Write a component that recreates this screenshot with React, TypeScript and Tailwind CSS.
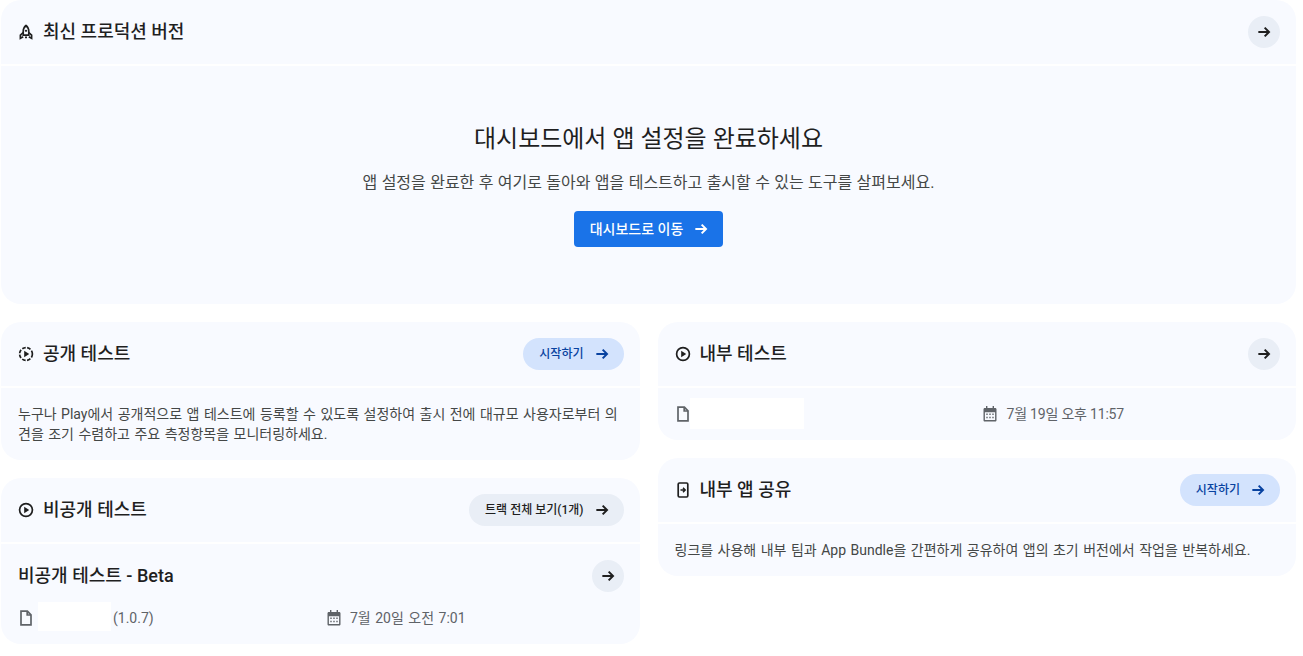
import type { ReactNode } from 'react';

const Arrow = ({ className = 'w-4 h-4' }: { className?: string }) => (
  <svg viewBox="0 0 24 24" className={className} fill="none" stroke="currentColor" strokeWidth="3">
    <path d="M3.5 12H19M13 5.5l6.5 6.5-6.5 6.5" />
  </svg>
);

const Rocket = () => (
  <svg viewBox="0 0 16 16" className="w-4 h-4 text-[#1f1f1f]" fill="none" stroke="currentColor" strokeWidth="1.7">
    <path d="M8 1.5c2 1.6 2.8 4 2.8 6.3v3.4H5.2V7.8C5.2 5.5 6 3.1 8 1.5z" />
    <path d="M5.2 8.5 2.4 11.2v3.2l2.8-1.6M10.8 8.5l2.8 2.7v3.2l-2.8-1.6" />
    <circle cx="8" cy="6.8" r="1.1" fill="currentColor" stroke="none" />
    <path d="M7 13.4h2" />
  </svg>
);

const PlayDashed = () => (
  <svg viewBox="0 0 16 16" className="w-4 h-4 text-[#1f1f1f]" fill="none" stroke="currentColor" strokeWidth="1.7">
    <circle cx="8" cy="8" r="6.4" strokeDasharray="3.6 1.5" />
    <path d="M6.2 4.8v6.4L11.2 8z" fill="currentColor" stroke="none" />
  </svg>
);

const PlayCircle = () => (
  <svg viewBox="0 0 16 16" className="w-4 h-4 text-[#1f1f1f]" fill="none" stroke="currentColor" strokeWidth="1.7">
    <circle cx="8" cy="8" r="6.4" />
    <path d="M6.2 4.8v6.4L11.2 8z" fill="currentColor" stroke="none" />
  </svg>
);

const PhoneShare = () => (
  <svg viewBox="0 0 16 16" className="w-4 h-4 text-[#1f1f1f]" fill="none" stroke="currentColor" strokeWidth="1.7">
    <rect x="3.2" y="1" width="9.6" height="14" rx="1.2" />
    <path d="M5.5 8h4.5M8 5.8 10.2 8 8 10.2" strokeWidth="1.5" />
  </svg>
);

const FileIcon = () => (
  <svg viewBox="0 0 16 16" className="w-4 h-4 text-[#5f6368] shrink-0" fill="none" stroke="currentColor" strokeWidth="1.7">
    <path d="M3 1.2h6.4L13 4.8v10H3z" />
    <path d="M9.2 1.2v3.8H13" />
  </svg>
);

const CalendarIcon = () => (
  <svg viewBox="0 0 16 16" className="w-4 h-4 text-[#5f6368] shrink-0" fill="currentColor">
    <path d="M4 0h1.4v2h5.2V0H12v2h1.2c.8 0 1.3.6 1.3 1.3v10.9c0 .8-.6 1.3-1.3 1.3H2.8c-.8 0-1.3-.6-1.3-1.3V3.3C1.5 2.6 2 2 2.8 2H4zM2.9 6.2v7.9h10.2V6.2z" />
    <path d="M4.3 7.5h1.4v1.4H4.3zM7.3 7.5h1.4v1.4H7.3zM10.3 7.5h1.4v1.4h-1.4zM4.3 10.8h1.4v1.4H4.3zM7.3 10.8h1.4v1.4H7.3zM10.3 10.8h1.4v1.4h-1.4z" />
  </svg>
);

const RoundArrow = () => (
  <button className="w-8 h-8 rounded-full bg-[#e9eef6] flex items-center justify-center text-[#1f1f1f]">
    <Arrow />
  </button>
);

const PillButton = ({ label, blue }: { label: string; blue?: boolean }) => (
  <button
    className={
      blue
        ? 'h-8 pl-4 pr-[14px] rounded-full bg-[#d3e3fd] text-[#0842a0] flex items-center gap-[10px] text-xs font-medium'
        : 'h-8 pl-4 pr-[14px] rounded-full bg-[#e9eef6] text-[#1f1f1f] flex items-center gap-[10px] text-xs font-medium'
    }
  >
    {label}
    <Arrow />
  </button>
);

const Panel = ({ children }: { children: ReactNode }) => (
  <section className="bg-[#f8faff] rounded-[20px] overflow-hidden">{children}</section>
);

const PanelHeader = ({ icon, title, action }: { icon: ReactNode; title: string; action: ReactNode }) => (
  <div className="h-[66px] border-b-2 border-white pl-[17px] pr-4 flex items-center justify-between">
    <div className="flex items-center gap-[9px]">
      {icon}
      <h2 className="text-lg font-medium text-[#1f1f1f]">{title}</h2>
    </div>
    {action}
  </div>
);

export default function App() {
  return (
    <div className="w-[1303px] h-[656px] overflow-hidden bg-white pl-px pr-[7px] font-['Roboto','Noto_Sans_CJK_KR',sans-serif] text-[#1f1f1f]">
      <Panel>
        <PanelHeader icon={<Rocket />} title="최신 프로덕션 버전" action={<RoundArrow />} />
        <div className="h-[238px] flex flex-col items-center pt-[56px]">
          <h1 className="text-2xl leading-[34px]">대시보드에서 앱 설정을 완료하세요</h1>
          <p className="mt-[17px] text-base leading-5 text-[#444746] [word-spacing:0.4px]">
            앱 설정을 완료한 후 여기로 돌아와 앱을 테스트하고 출시할 수 있는 도구를 살펴보세요.
          </p>
          <button className="mt-[18px] h-9 pl-4 pr-[14px] rounded bg-[#1a73e8] text-white text-sm font-medium flex items-center gap-[10px]">
            대시보드로 이동
            <Arrow />
          </button>
        </div>
      </Panel>

      <div className="mt-[18px] grid grid-cols-2 gap-[18px] items-start">
        <div className="flex flex-col gap-[18px]">
          <Panel>
            <PanelHeader icon={<PlayDashed />} title="공개 테스트" action={<PillButton label="시작하기" blue />} />
            <p className="h-[72px] pl-[17px] pr-4 text-sm leading-[20px] text-[#444746] flex items-center break-all [word-spacing:1px]">
              누구나 Play에서 공개적으로 앱 테스트에 등록할 수 있도록 설정하여 출시 전에 대규모 사용자로부터 의견을 조기 수렴하고 주요 측정항목을 모니터링하세요.
            </p>
          </Panel>
          <Panel>
            <PanelHeader icon={<PlayCircle />} title="비공개 테스트" action={<PillButton label="트랙 전체 보기(1개)" />} />
            <div className="h-[100px] pl-[17px] pr-4">
              <div className="h-[64px] flex items-center justify-between">
                <h3 className="text-lg font-medium">비공개 테스트 - Beta</h3>
                <RoundArrow />
              </div>
              <div className="h-5 flex items-center text-sm text-[#5f6368]">
                <div className="w-[308px] flex items-center">
                  <FileIcon />
                  <div className="ml-1 -mt-1 w-[73px] h-[29px] bg-white" />
                  <span className="ml-0.5">(1.0.7)</span>
                </div>
                <div className="flex items-center gap-2">
                  <CalendarIcon />
                  <span className="[word-spacing:1px]">7월 20일 오전 7:01</span>
                </div>
              </div>
            </div>
          </Panel>
        </div>

        <div className="flex flex-col gap-[18px]">
          <Panel>
            <PanelHeader icon={<PlayCircle />} title="내부 테스트" action={<RoundArrow />} />
            <div className="h-[52px] pl-[17px] pr-4 flex items-center text-sm text-[#5f6368]">
              <div className="w-[307px] flex items-center">
                <FileIcon />
                <div className="-ml-px -mt-0.5 w-[114px] h-[31px] bg-white" />
              </div>
              <div className="flex items-center gap-2">
                <CalendarIcon />
                <span className="ml-px tracking-[-0.2px]">7월 19일 오후 11:57</span>
              </div>
            </div>
          </Panel>
          <Panel>
            <PanelHeader icon={<PhoneShare />} title="내부 앱 공유" action={<PillButton label="시작하기" blue />} />
            <p className="h-[52px] pl-[17px] pr-4 text-sm leading-5 text-[#444746] flex items-center [word-spacing:1px]">
              링크를 사용해 내부 팀과 App Bundle을 간편하게 공유하여 앱의 초기 버전에서 작업을 반복하세요.
            </p>
          </Panel>
        </div>
      </div>
    </div>
  );
}
